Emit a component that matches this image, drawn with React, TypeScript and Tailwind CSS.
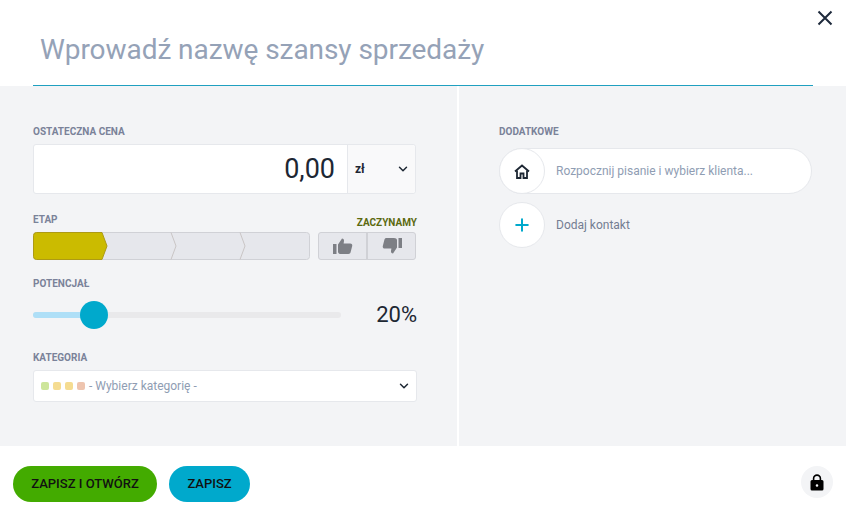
import React from "react";
import { ChevronDown, Plus } from "lucide-react";

const FieldLabel = ({ children }: { children: React.ReactNode }) => (
  <div className="text-[10px] leading-[12px] font-bold text-[#7a8299]">{children}</div>
);

const ThumbUp = () => (
  <svg width="20" height="16" viewBox="0 0 20 16" fill="#7d7f85">
    <rect x="0" y="6" width="3.5" height="10" />
    <path d="M5 6.500 9 0.500c1.400 0 2.200 1 2 2.400L10.600 5.500h6.600c1.500 0 2.400 1.200 2 2.600l-1.600 6.200c-.3 1-1 1.700-2.200 1.700H8c-1.600 0-3-.8-3-2.300z" />
  </svg>
);

const ThumbDown = () => (
  <svg width="20" height="16" viewBox="0 0 20 16" fill="#7d7f85">
    <rect x="16.500" y="0" width="3.500" height="10" />
    <path d="M15 9.500 11 15.500c-1.400 0-2.200-1-2-2.400l.4-2.600H2.800c-1.500 0-2.400-1.200-2-2.600L2.400 1.700C2.700.7 3.400 0 4.600 0H12c1.600 0 3 .8 3 2.300z" />
  </svg>
);

export default function App() {
  return (
    <div className="w-[846px] h-[512px] bg-white flex flex-col overflow-hidden font-['Roboto',sans-serif]">
      {/* header */}
      <div className="h-[86px] shrink-0 px-[33px] relative">
        <div className="h-[86px] border-b border-[#1fa0c0] pl-[7px] pt-[30px]">
          <div className="text-[28px] leading-[40px] tracking-[-0.06px] text-[#95a2b7]">Wprowadź nazwę szansy sprzedaży</div>
        </div>
        <button className="absolute right-[13px] top-[10px]">
          <svg width="16" height="16" viewBox="0 0 16 16" fill="none" stroke="#1e2a3c" strokeWidth="2" className="block">
            <path d="M1.500 1.500 14.500 14.500M14.500 1.500 1.500 14.500" />
          </svg>
        </button>
      </div>

      {/* body */}
      <div className="flex flex-1 bg-[#f3f4f6]">
        <div className="w-[457px] shrink-0 pl-[33px] pr-[40px] pt-[40px]">
          <FieldLabel>OSTATECZNA CENA</FieldLabel>
          <div className="mt-[6px] h-[50px] flex bg-white border border-[#e6e8ec] rounded-[3px] w-[383px]">
            <div className="flex-1 flex items-center justify-end pr-[12px] text-[27px] text-[#1d2733]">0,00</div>
            <div className="w-[68px] border-l border-[#e6e8ec] bg-[#f9f9fa] rounded-r-[3px] flex items-center justify-between pl-[7px] pr-[5px]">
              <span className="text-[12px] font-bold text-[#1d2733]">zł</span>
              <ChevronDown size={14} strokeWidth={2.5} className="text-[#1d2733]" />
            </div>
          </div>

          <div className="mt-[21px] flex items-end justify-between w-[384px]">
            <div className="-translate-y-px"><FieldLabel>ETAP</FieldLabel></div>
            <div className="text-[10px] leading-[12px] font-bold text-[#5c6a10] -mb-[2px]">ZACZYNAMY</div>
          </div>
          <div className="mt-[5px] flex w-[383px] justify-between">
            <div className="w-[277px] h-[28px]">
              <svg className="block" width="277" height="28" viewBox="0 0 277 28">
                <rect x="0.500" y="0.500" width="276" height="27" rx="3" fill="#e6e7ec" stroke="#d0d1d6" />
                <path d="M3.500.500H69l5 13.500-5 13.500H3.500a3 3 0 0 1-3-3V3.500a3 3 0 0 1 3-3z" fill="#cbbb00" stroke="#ad9a15" />
                <path d="M138 .500l5 13.500-5 13.500M207 .500l5 13.500-5 13.500" fill="none" stroke="#c9c5c5" />
              </svg>
            </div>
            <div className="w-[98px] h-[28px] flex bg-[#e6e7ec] border border-[#d0d1d6] rounded-[3px]">
              <div className="w-[49px] flex items-center justify-center border-r-2 border-[#d0d1d6]"><ThumbUp /></div>
              <div className="flex-1 flex items-center justify-center"><ThumbDown /></div>
            </div>
          </div>

          <div className="mt-[18px]"><FieldLabel>POTENCJAŁ</FieldLabel></div>
          <div className="mt-[11px] h-[28px] flex items-center justify-between w-[384px]">
            <div className="relative w-[308px] h-[6px] bg-[#e9e9eb] rounded-full">
              <div className="w-[61px] h-full bg-[#aedff7] rounded-full" />
              <div className="absolute left-[47px] top-[-11px] w-[28px] h-[28px] rounded-full bg-[#00a9cc]" />
            </div>
            <span className="text-[22px] text-[#1d2733] -translate-y-px">20%</span>
          </div>

          <div className="mt-[23px]"><FieldLabel>KATEGORIA</FieldLabel></div>
          <div className="mt-[6px] h-[32px] w-[384px] bg-white border border-[#e6e8ec] rounded-[3px] flex items-center pl-[7px] pr-[5px]">
            <span className="w-[8px] h-[8px] rounded-[2px] bg-[#cde59a]" />
            <span className="ml-[4px] w-[8px] h-[8px] rounded-[2px] bg-[#f5dc91]" />
            <span className="ml-[4px] w-[8px] h-[8px] rounded-[2px] bg-[#f5dc91]" />
            <span className="ml-[4px] w-[8px] h-[8px] rounded-[2px] bg-[#eec4ae]" />
            <span className="ml-[4px] text-[12px] text-[#8f9db3]">- Wybierz kategorię -</span>
            <ChevronDown size={14} strokeWidth={2.5} className="ml-auto text-[#1d2733]" />
          </div>
        </div>

        <div className="w-[2px] shrink-0 bg-white" />

        <div className="flex-1 pl-[40px] pr-[34px] pt-[40px]">
          <FieldLabel>DODATKOWE</FieldLabel>
          <div className="mt-[10px] h-[46px] bg-white border border-[#e6e8ec] rounded-full flex items-center">
            <div className="w-[46px] h-[46px] -ml-px shrink-0 rounded-full bg-white border border-[#e6e8ec] flex items-center justify-center">
              <svg width="16" height="15" viewBox="0 0 16 15" fill="none" stroke="#1d2733" strokeWidth="1.800">
                <path d="M1 7.500 8 1.500l7 6" />
                <path d="M3 6.500V14h3.500V9.500h3V14H13V6.500" />
              </svg>
            </div>
            <span className="ml-[11px] text-[12px] text-[#8f9db3]">Rozpocznij pisanie i wybierz klienta...</span>
          </div>
          <div className="mt-[8px] flex items-center">
            <div className="w-[46px] h-[46px] shrink-0 rounded-full bg-white border border-[#e6e8ec] flex items-center justify-center">
              <Plus size={20} strokeWidth={2.4} className="text-[#00a9cc]" />
            </div>
            <span className="ml-[11px] text-[12px] text-[#737d92]">Dodaj kontakt</span>
          </div>
        </div>
      </div>

      {/* footer */}
      <div className="h-[66px] shrink-0 flex items-start pt-[20px] px-[13px]">
        <button className="h-[36px] w-[144px] rounded-full bg-[#43ab00] text-[13px] font-medium text-[#111]">ZAPISZ I OTWÓRZ</button>
        <button className="ml-[12px] h-[36px] w-[81px] rounded-full bg-[#00a9cc] text-[13px] font-medium text-[#111]">ZAPISZ</button>
        <div className="ml-auto w-[32px] h-[32px] rounded-full bg-[#f3f4f6] flex items-center justify-center">
          <svg width="14" height="17" viewBox="0 0 14 17" fill="#000">
            <path d="M2.800 6.500V4.500a4.200 4.200 0 0 1 8.400 0v2h-1.600v-2a2.600 2.600 0 0 0-5.200 0v2z" />
            <path fillRule="evenodd" d="M2 6h10a1.500 1.500 0 0 1 1.500 1.500v7.500a1.500 1.500 0 0 1-1.500 1.500H2A1.500 1.500 0 0 1 .5 15V7.500A1.500 1.500 0 0 1 2 6zm5 4.200a1.300 1.300 0 1 0 0 2.600 1.300 1.300 0 0 0 0-2.600z" />
          </svg>
        </div>
      </div>
    </div>
  );
}
